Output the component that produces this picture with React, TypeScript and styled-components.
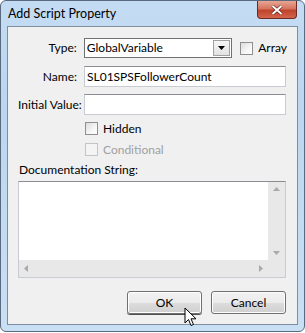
import React from "react";
import styled, { createGlobalStyle } from "styled-components";

const Global = createGlobalStyle`
  html, body { margin: 0; padding: 0; background: #ffffff; }
  body { font-family: Lato, "Noto Sans", sans-serif; }
`;

const Frame = styled.div`
  position: relative;
  width: 305px;
  height: 332px;
  box-sizing: border-box;
  border: 1px solid #5a6a7e;
  border-radius: 6px;
  background: linear-gradient(180deg, #c4dcf3 0%, #bcd6f0 30%, #c9dff4 100%);
  display: flex;
  flex-direction: column;
  overflow: hidden;
`;

const TitleBar = styled.div`
  height: 25px;
  flex: none;
  display: flex;
  align-items: center;
  justify-content: space-between;
  padding-left: 7px;
  padding-right: 7px;
`;

const Title = styled.div`
  font-size: 12.5px;
  line-height: 14px;
  color: #000;
  margin-top: 1px;
`;

const CloseBtn = styled.div`
  width: 40px;
  height: 18px;
  margin-top: -7px;
  box-sizing: border-box;
  border: 1px solid #6e2a22;
  border-top: none;
  border-radius: 0 0 4px 4px;
  background: linear-gradient(180deg, #e8a593 0%, #d6745f 45%, #c0432b 55%, #d2654c 100%);
  display: flex;
  align-items: center;
  justify-content: center;
`;

const Client = styled.div`
  margin: 0 6px;
  flex: 1;
  box-sizing: border-box;
  border: 1px solid #7f8da1;
  background: #f0f0f0;
  padding: 11px 10px 0 10px;
  display: flex;
  flex-direction: column;
`;

const BottomEdge = styled.div`
  height: 6px;
  flex: none;
`;

const Row = styled.div<{ $mt?: number; $h?: number }>`
  display: flex;
  align-items: center;
  margin-top: ${(p) => p.$mt ?? 0}px;
  height: ${(p) => (p.$h ? `${p.$h}px` : "auto")};
`;

const Label = styled.div`
  width: 59px;
  text-align: right;
  font-size: 12px;
  line-height: 14px;
  color: #000;
  margin-right: 7px;
  white-space: nowrap;
`;

const Combo = styled.div`
  width: 149px;
  height: 20px;
  box-sizing: border-box;
  border: 1px solid #707070;
  background: #fff;
  display: flex;
  align-items: center;
  font-size: 12px;
  line-height: 14px;
  padding-left: 2px;
`;

const ComboText = styled.div`
  flex: 1;
`;

const ComboArrow = styled.div`
  width: 17px;
  height: 16px;
  box-sizing: border-box;
  border: 1px solid #a0a0a0;
  background: linear-gradient(180deg, #f6f6f6, #e2e2e2);
  margin-right: 1px;
  display: flex;
  align-items: center;
  justify-content: center;
`;

const Check = styled.div<{ $disabled?: boolean }>`
  width: 13px;
  height: 13px;
  flex: none;
  box-sizing: border-box;
  border: 1px solid ${(p) => (p.$disabled ? "#c4c4c4" : "#8f8f8f")};
  background: ${(p) =>
    p.$disabled ? "#f4f4f4" : "linear-gradient(135deg, #dcdcdc 0%, #f6f6f6 60%, #ffffff 100%)"};
`;

const CheckLabel = styled.div<{ $disabled?: boolean }>`
  font-size: 12px;
  line-height: 14px;
  margin-left: 5px;
  color: ${(p) => (p.$disabled ? "#a0a0a0" : "#000")};
`;

const Field = styled.div`
  width: 202px;
  height: 21px;
  box-sizing: border-box;
  border: 1px solid #c8ccd2;
  border-top-color: #8a8d92;
  background: #fff;
  font-size: 12px;
  line-height: 14px;
  display: flex;
  align-items: center;
  padding-left: 2px;
`;

const Indent = styled.div`
  width: 67px;
  flex: none;
`;

const DocLabel = styled.div`
  font-size: 12px;
  line-height: 14px;
  margin-top: 7px;
  margin-left: 1px;
`;

const TextArea = styled.div`
  margin-top: 4px;
  width: 268px;
  height: 97px;
  flex: none;
  box-sizing: border-box;
  border: 1px solid #c8ccd2;
  border-top-color: #8a8d92;
  background: #fff;
  display: grid;
  grid-template-columns: 1fr 17px;
  grid-template-rows: 1fr 17px;
`;

const VScroll = styled.div`
  background: #e8e8e8;
  display: flex;
  flex-direction: column;
  justify-content: space-between;
  align-items: center;
  padding: 5px 0;
`;

const HScroll = styled.div`
  background: #e8e8e8;
  display: flex;
  justify-content: space-between;
  align-items: center;
  padding: 0 5px;
`;

const Corner = styled.div`
  background: #e8e8e8;
`;

const Buttons = styled.div`
  display: flex;
  justify-content: flex-end;
  gap: 9px;
  margin-top: 13px;
  padding-right: 1px;
`;

const Button = styled.div<{ $default?: boolean }>`
  width: 75px;
  height: 23px;
  box-sizing: border-box;
  border: 1px solid #707070;
  border-radius: 3px;
  box-shadow: ${(p) => (p.$default ? "inset 0 0 0 1px #ffffff, 0 1px 0 #505050" : "inset 0 0 0 1px #fcfcfc")};
  background: linear-gradient(180deg, #f2f2f2 0%, #ebebeb 50%, #dddddd 51%, #cfcfcf 100%);
  font-size: 12px;
  line-height: 14px;
  display: flex;
  align-items: center;
  justify-content: center;
  color: #000;
`;

const Cursor = styled.svg`
  position: absolute;
  left: 183px;
  top: 306px;
`;

const Tri = ({ dir }: { dir: "up" | "down" | "left" | "right" }) => {
  const pts: Record<string, string> = {
    up: "0,4 3.5,0 7,4",
    down: "0,0 3.5,4 7,0",
    left: "4,0 0,3.5 4,7",
    right: "0,0 4,3.5 0,7",
  };
  const vertical = dir === "up" || dir === "down";
  return (
    <svg width={vertical ? 7 : 4} height={vertical ? 4 : 7}>
      <polygon points={pts[dir]} fill="#a9a9a9" />
    </svg>
  );
};

export default function App() {
  return (
    <>
      <Global />
      <Frame>
        <TitleBar>
          <Title>Add Script Property</Title>
          <CloseBtn>
            <svg width="12" height="10" viewBox="0 0 12 10">
              <path d="M1.5 1 L10.5 9 M10.5 1 L1.5 9" stroke="#5a2018" strokeWidth="3.2" />
              <path d="M1.5 1 L10.5 9 M10.5 1 L1.5 9" stroke="#ffffff" strokeWidth="2" />
            </svg>
          </CloseBtn>
        </TitleBar>
        <Client>
          <Row>
            <Label>Type:</Label>
            <Combo>
              <ComboText>GlobalVariable</ComboText>
              <ComboArrow>
                <svg width="7" height="4">
                  <polygon points="0,0 7,0 3.5,4" fill="#000" />
                </svg>
              </ComboArrow>
            </Combo>
            <Row style={{ marginLeft: 8 }}>
              <Check />
              <CheckLabel>Array</CheckLabel>
            </Row>
          </Row>
          <Row $mt={8}>
            <Label>Name:</Label>
            <Field>SL01SPSFollowerCount</Field>
          </Row>
          <Row $mt={7}>
            <Label>Initial Value:</Label>
            <Field />
          </Row>
          <Row $mt={7} $h={13}>
            <Indent />
            <Check />
            <CheckLabel>Hidden</CheckLabel>
          </Row>
          <Row $mt={8} $h={13}>
            <Indent />
            <Check $disabled />
            <CheckLabel $disabled>Conditional</CheckLabel>
          </Row>
          <DocLabel>Documentation String:</DocLabel>
          <TextArea>
            <div />
            <VScroll>
              <Tri dir="up" />
              <Tri dir="down" />
            </VScroll>
            <HScroll>
              <Tri dir="left" />
              <Tri dir="right" />
            </HScroll>
            <Corner />
          </TextArea>
          <Buttons>
            <Button $default>OK</Button>
            <Button>Cancel</Button>
          </Buttons>
        </Client>
        <BottomEdge />
        <Cursor width="14" height="22" viewBox="0 0 14 22">
          <path
            d="M1 1 L1 16 L4.5 12.5 L7 18.5 L9.5 17.5 L7 11.8 L12 11.8 Z"
            fill="#ffffff"
            stroke="#000000"
            strokeWidth="1"
            strokeLinejoin="round"
          />
        </Cursor>
      </Frame>
    </>
  );
}
